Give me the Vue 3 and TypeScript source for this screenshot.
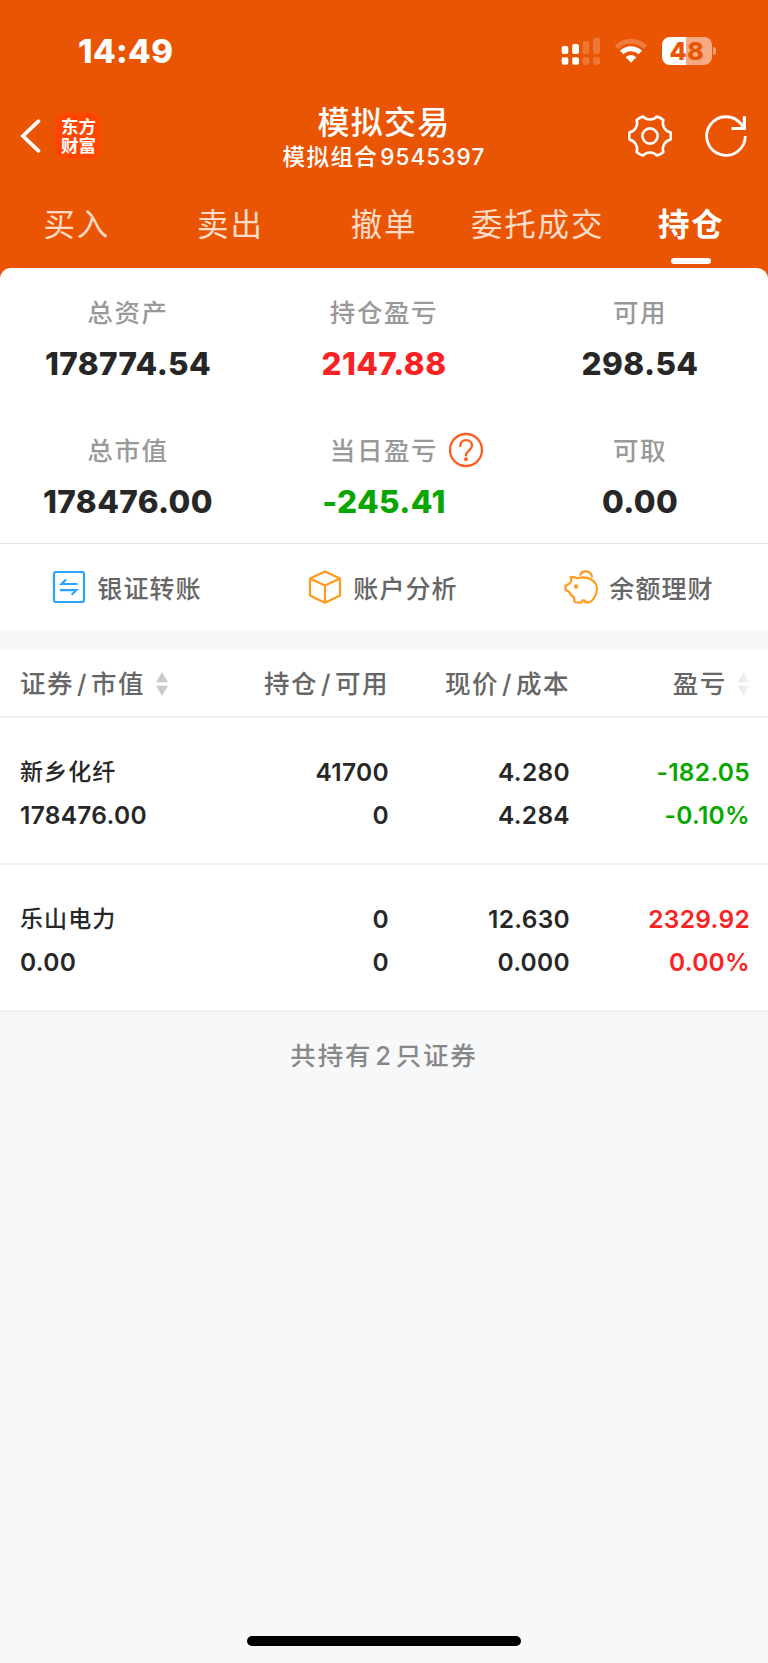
<script setup lang="ts">
interface Stat { label: string; value: string; tone?: 'up' | 'down'; help?: boolean }
interface Holding { name: string; value: string; held: string; usable: string; price: string; cost: string; profit: string; rate: string; tone: 'up' | 'down' }

const tabs = ['买入', '卖出', '撤单', '委托成交', '持仓']
const activeTab = '持仓'

const stats: Stat[] = [
  { label: '总资产', value: '178774.54' },
  { label: '持仓盈亏', value: '2147.88', tone: 'up' },
  { label: '可用', value: '298.54' },
  { label: '总市值', value: '178476.00' },
  { label: '当日盈亏', value: '-245.41', tone: 'down', help: true },
  { label: '可取', value: '0.00' },
]

const holdings: Holding[] = [
  { name: '新乡化纤', value: '178476.00', held: '41700', usable: '0', price: '4.280', cost: '4.284', profit: '-182.05', rate: '-0.10%', tone: 'down' },
  { name: '乐山电力', value: '0.00', held: '0', usable: '0', price: '12.630', cost: '0.000', profit: '2329.92', rate: '0.00%', tone: 'up' },
]

// Six-lobed gear outline around (22, 22)
const polar = (r: number, deg: number): string => {
  const a = (deg * Math.PI) / 180
  return `${(22 + r * Math.cos(a)).toFixed(2)} ${(22 + r * Math.sin(a)).toFixed(2)}`
}
let gear = `M${polar(20.8, -10)}`
for (let k = 0; k < 6; k++) {
  const a = k * 60
  gear += ` Q${polar(21.2, a)} ${polar(20.8, a + 10)} C${polar(15.8, a + 17)} ${polar(15.8, a + 43)} ${polar(20.8, a + 50)}`
}
gear += 'Z'
</script>

<template>
  <div class="screen">
    <header class="top">
      <div class="status">
        <span class="time">14:49</span>
        <div class="indicators">
          <svg class="signal" width="40" height="28" viewBox="0 0 40 28">
            <g fill="#fff">
              <rect x="0.7" y="9" width="6.6" height="8" rx="2" /><rect x="0.7" y="20.3" width="6.6" height="7.4" rx="2" />
              <rect x="11.2" y="7" width="6.8" height="10" rx="2" /><rect x="11.2" y="20.3" width="6.8" height="7.4" rx="2" />
            </g>
            <g fill="#fff" opacity="0.2">
              <rect x="21.7" y="4" width="6.6" height="13" rx="2" /><rect x="21.7" y="20.3" width="6.6" height="7.4" rx="2" />
              <rect x="32" y="0.7" width="7" height="16.3" rx="2" /><rect x="32" y="20.3" width="7" height="7.4" rx="2" />
            </g>
          </svg>
          <svg class="wifi" width="34" height="26" viewBox="0 0 34 26">
            <path d="M2.5 9.2a20.6 20.6 0 0 1 29 0" fill="none" stroke="#fff" stroke-opacity="0.22" stroke-width="4.8" />
            <path d="M7.7 14.6a13.2 13.2 0 0 1 18.6 0" fill="none" stroke="#fff" stroke-width="5" />
            <path d="M11.7 19.2a7.8 7.8 0 0 1 10.6 0L17 24.8Z" fill="#fff" />
          </svg>
          <div class="battery"><span>48</span></div>
          <i class="nub"></i>
        </div>
      </div>

      <div class="nav">
        <div class="nav-side">
          <svg class="back" width="22" height="36" viewBox="0 0 22 36"><path d="M18.5 3.2 3 18 18.5 32.8" fill="none" stroke="#fff" stroke-width="3.8" stroke-linecap="round" stroke-linejoin="miter" /></svg>
          <div class="logo"><span>东方</span><span>财富</span></div>
        </div>
        <div class="titles">
          <h1>模拟交易</h1>
          <p>模拟组合<b>9545397</b></p>
        </div>
        <div class="nav-side actions">
          <svg width="44" height="44" viewBox="0 0 44 44" fill="none" stroke="#fff" stroke-width="2.6" stroke-linejoin="round">
            <path :d="gear" /><circle cx="22" cy="22" r="7.6" />
          </svg>
          <svg class="refresh" width="44" height="44" viewBox="0 0 44 44" fill="none" stroke="#fff" stroke-width="2.8">
            <path d="M41.3 22A19.3 19.3 0 1 1 37.4 10.4L40.4 14.4" /><path d="M40.4 2.2v12.3H27.6" stroke-width="3.2" />
          </svg>
        </div>
      </div>

      <nav class="tabs">
        <a v-for="t in tabs" :key="t" :class="{ active: t === activeTab }">{{ t }}</a>
      </nav>
    </header>

    <section class="summary">
      <div class="stats">
        <div v-for="s in stats" :key="s.label" class="stat">
          <div class="label">
            {{ s.label }}
            <svg v-if="s.help" class="help" width="36" height="36" viewBox="0 0 36 36" fill="none" stroke="#ff5e22" stroke-width="2.3">
              <circle cx="18" cy="18" r="16" />
              <path d="M12.2 14.2C12.2 10.6 14.6 8.2 18 8.2s6 2.2 6 5.4c0 4.6-6 5-6 10" stroke-linecap="round" />
              <circle cx="18" cy="27.2" r="1.9" fill="#ff5e22" stroke="none" />
            </svg>
          </div>
          <div class="value" :class="s.tone">{{ s.value }}</div>
        </div>
      </div>
      <div class="quick">
        <div class="link">
          <svg width="34" height="36" viewBox="0 0 34 36" fill="none" stroke="#2ca4fb" stroke-width="2.2">
            <rect x="2" y="3" width="30" height="30" rx="2" /><path d="M25.5 15H9.5l4.6-4.5M8 21.2h16.3l-4.6 4.6" />
          </svg>
          <span>银证转账</span>
        </div>
        <div class="link">
          <svg width="34" height="36" viewBox="0 0 34 36" fill="none" stroke="#ff9a1b" stroke-width="2.2" stroke-linejoin="round">
            <path d="M17 2.5 32 9.5v17L17 33.8 2 26.5v-17ZM2 9.5l15 7 15-7M17 16.5v17" />
          </svg>
          <span>账户分析</span>
        </div>
        <div class="link">
          <svg width="34" height="36" viewBox="0 0 34 36" fill="none" stroke="#ff9a1b" stroke-width="2.2" stroke-linejoin="round" stroke-linecap="round">
            <path d="M7 8.2C9.5 8 11.5 8.3 13.5 9.2C19 7.5 25 8.8 29 11.6C33.5 15.5 34 21.5 31 27C29.5 30 28.5 32.5 25 33.3H21.5L20.5 31.3H18.5L17.5 33.5C14.5 33.8 11.5 34 10.6 32.5L10 28.5C7.5 26.8 6 25 5 22.8L1.5 20.8V16.8L5.5 14.6C5.8 13.5 6.5 12.8 7.5 12L6.8 8.2Z" />
            <path d="M16.3 5.8c2-5 10-4.5 11.7 1.8" /><circle cx="12" cy="17.5" r="2.2" fill="#ff9a1b" stroke="none" />
          </svg>
          <span>余额理财</span>
        </div>
      </div>
    </section>

    <section class="table">
      <div class="row head">
        <div>证券<em>/</em>市值
          <svg class="sort" width="12" height="24" viewBox="0 0 12 24"><path d="M6 0l6 10.3H0zM6 24l6-10.3H0z" fill="#cacaca" /></svg>
        </div>
        <div>持仓<em>/</em>可用</div>
        <div>现价<em>/</em>成本</div>
        <div>盈亏
          <svg class="sort" width="12" height="24" viewBox="0 0 12 24">
            <defs><linearGradient id="fade" x1="0" x2="1" y1="0" y2="0"><stop offset="0" stop-color="#e6e6e6" /><stop offset="1" stop-color="#f6f6f6" /></linearGradient></defs>
            <path d="M6 0l6 10.3H0zM6 24l6-10.3H0z" fill="url(#fade)" />
          </svg>
        </div>
      </div>
      <div v-for="h in holdings" :key="h.name" class="row item">
        <div><span class="name">{{ h.name }}</span><span>{{ h.value }}</span></div>
        <div><span>{{ h.held }}</span><span>{{ h.usable }}</span></div>
        <div><span>{{ h.price }}</span><span>{{ h.cost }}</span></div>
        <div :class="h.tone"><span>{{ h.profit }}</span><span>{{ h.rate }}</span></div>
      </div>
    </section>

    <footer>
      <p>共持有<em>2</em>只证券</p>
      <div class="home"></div>
    </footer>
  </div>
</template>

<style>
body { margin: 0; background: #f7f8fa; }
</style>

<style scoped>
.screen { width: 768px; height: 1663px; display: flex; flex-direction: column; background: #f7f8fa; font-family: Inter, "Noto Sans CJK SC", sans-serif; color: #272727; overflow: hidden; }
.screen * { box-sizing: border-box; }
h1, p { margin: 0; font-weight: 500; }
em { font-style: normal; }
.top { flex: none; height: 280px; background: #ea5504; color: #fff; }
.status { height: 102px; padding: 0 52px 0 78px; display: flex; justify-content: space-between; align-items: center; }
.time { font-size: 33px; font-weight: 800; letter-spacing: 0.4px; }
.indicators { display: flex; align-items: center; }
.signal { margin-right: 13px; }
.wifi { margin-right: 14px; }
.battery { width: 50px; height: 28px; border-radius: 8px; background: linear-gradient(90deg, #fff 24px, #f5ab82 24px); color: #ea5504; font-size: 25px; line-height: 29px; font-weight: 800; text-align: center; letter-spacing: 0.5px; }
.nub { width: 3px; height: 8px; margin-left: 1px; border-radius: 0 3px 3px 0; background: #f3a075; }
.nav { height: 78px; display: flex; justify-content: space-between; }
.nav-side { width: 200px; height: 68px; display: flex; align-items: center; }
.back { margin: 0 13px 0 20px; }
.logo { width: 46px; height: 46px; padding-left: 1px; border-radius: 10px; background: #ff4600; display: flex; flex-direction: column; align-items: center; justify-content: center; font-size: 17.5px; line-height: 19.5px; font-weight: 700; }
.titles { text-align: center; white-space: nowrap; padding-top: 1px; }
h1 { font-size: 32px; line-height: 40px; letter-spacing: 1.3px; }
p b { font-weight: 500; letter-spacing: 1.1px; margin-left: 2px; }
.titles p { font-size: 22.5px; line-height: 27px; letter-spacing: 1.4px; }
.actions { justify-content: flex-end; padding-right: 20px; gap: 32px; }
.tabs { display: grid; grid-template-columns: repeat(5, 1fr); }
.tabs a { display: flex; flex-direction: column; align-items: center; font-size: 31.5px; line-height: 44px; padding-top: 23px; letter-spacing: 1.8px; color: #ffdcc8; white-space: nowrap; }
.tabs .active { color: #fff; font-weight: 700; }
.active::after { content: ""; width: 40px; height: 6px; margin-top: 11px; border-radius: 3px; background: #fff; }
.summary { flex: none; height: 362px; margin-top: -12px; background: #fff; border-radius: 11px 11px 0 0; }
.stats { height: 276px; display: grid; grid-template-columns: repeat(3, 1fr); grid-template-rows: 138px 138px; border-bottom: 1px solid #e2e2e2; }
.stat { display: flex; flex-direction: column; align-items: center; padding-top: 25px; }
.label { position: relative; font-size: 25.5px; line-height: 40px; letter-spacing: 1.6px; color: #999; font-weight: 500; }
.help { position: absolute; left: 118px; top: 1px; }
.value { font-size: 31.5px; line-height: 40px; margin-top: 11px; font-weight: 800; letter-spacing: 0.4px; }
.up { color: #fa2323; }
.down { color: #08a600; }
.quick { height: 86px; display: grid; grid-template-columns: repeat(3, 1fr); }
.link { display: flex; align-items: center; justify-content: center; gap: 11px; padding: 0 2px 1px 0; font-size: 25px; letter-spacing: 1.1px; color: #666; font-weight: 500; }
.table { flex: none; margin-top: 20px; background: #fff; }
.row { display: grid; grid-template-columns: 208px 161px 181px 180px; padding-left: 20px; border-bottom: 2px solid #f1f1f1; text-align: right; }
.row > div:first-child { text-align: left; }
.head { height: 68px; line-height: 68px; font-size: 25.5px; letter-spacing: 1.5px; color: #666; font-weight: 500; }
.head em { margin: 0 3px; }
.head > div { white-space: nowrap; }
.sort { margin-left: 3px; vertical-align: -3px; }
.item { height: 147px; padding-top: 32.5px; font-size: 24.5px; font-weight: 600; letter-spacing: 0.3px; }
.item span { display: block; line-height: 43.2px; }
.item .name { font-size: 23px; letter-spacing: 1.1px; font-weight: 500; }
footer { flex: 1; display: flex; flex-direction: column; align-items: center; justify-content: space-between; padding: 24px 0 17px; }
footer p { font-size: 25.5px; line-height: 40px; letter-spacing: 1.8px; color: #888; }
footer em { margin: 0 3px; }
.home { width: 274px; height: 10px; border-radius: 5px; background: #000; }
</style>
